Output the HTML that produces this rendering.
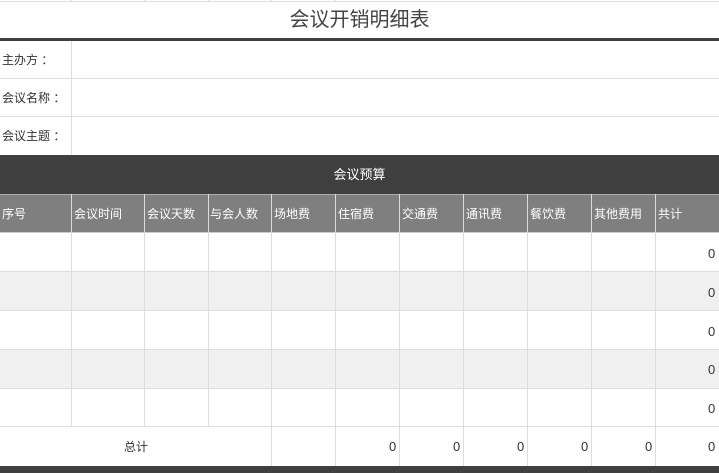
<!DOCTYPE html>
<html><head><meta charset="utf-8"><style>
*{margin:0;padding:0;box-sizing:border-box}
body{width:719px;height:473px;overflow:hidden;background:#fff;font-family:"Liberation Sans","Noto Sans CJK SC",sans-serif;color:#333;position:relative}
.a{position:absolute}
.t{font-size:12px;line-height:1}
.z{font-size:13px;line-height:1}
</style></head><body>
<div class="a" style="left:0;top:0;width:719px;height:2px;border-bottom:1px solid #ddd"></div>
<div class="a" style="left:71px;top:0;width:1px;height:2px;background:#ddd"></div>
<div class="a" style="left:144px;top:0;width:1px;height:2px;background:#ddd"></div>
<div class="a" style="left:208px;top:0;width:1px;height:2px;background:#ddd"></div>
<div class="a" style="left:271px;top:0;width:1px;height:2px;background:#ddd"></div>
<div class="a" style="left:335px;top:0;width:1px;height:2px;background:#ddd"></div>
<div class="a" style="left:0;top:2px;width:719px;height:36px;text-align:center;font-size:20px;line-height:36px;color:#444">会议开销明细表</div>
<div class="a" style="left:0;top:38px;width:719px;height:3px;background:#3f3f3f"></div>
<div class="a" style="left:71px;top:41px;width:1px;height:114px;background:#ddd"></div>
<div class="a" style="left:0;top:78px;width:719px;height:1px;background:#ddd"></div>
<div class="a" style="left:0;top:116px;width:719px;height:1px;background:#ddd"></div>
<div class="a t" style="left:2px;top:54px">主办方 ：</div>
<div class="a t" style="left:2px;top:92px">会议名称 ：</div>
<div class="a t" style="left:2px;top:130px">会议主题 ：</div>
<div class="a" style="left:0;top:155px;width:719px;height:39px;background:#3f3f3f;color:#fff;text-align:center;font-size:13px;line-height:39px">会议预算</div>
<div class="a" style="left:0;top:194px;width:719px;height:39px;background:#7f7f7f"></div>
<div class="a" style="left:0;top:272px;width:719px;height:39px;background:#f0f0f0"></div>
<div class="a" style="left:0;top:350px;width:719px;height:39px;background:#f0f0f0"></div>
<div class="a" style="left:0;top:194px;width:719px;height:1px;background:#aaa"></div>
<div class="a" style="left:0;top:232px;width:719px;height:1px;background:#ccc"></div>
<div class="a" style="left:0;top:271px;width:719px;height:1px;background:#ddd"></div>
<div class="a" style="left:0;top:310px;width:719px;height:1px;background:#ddd"></div>
<div class="a" style="left:0;top:349px;width:719px;height:1px;background:#ddd"></div>
<div class="a" style="left:0;top:388px;width:719px;height:1px;background:#ddd"></div>
<div class="a" style="left:0;top:426px;width:719px;height:1px;background:#ddd"></div>
<div class="a" style="left:0;top:466px;width:719px;height:7px;background:#3f3f3f"></div>
<div class="a" style="left:71px;top:194px;width:1px;height:233px;background:#ddd"></div>
<div class="a" style="left:144px;top:194px;width:1px;height:233px;background:#ddd"></div>
<div class="a" style="left:208px;top:194px;width:1px;height:233px;background:#ddd"></div>
<div class="a" style="left:271px;top:194px;width:1px;height:272px;background:#ddd"></div>
<div class="a" style="left:335px;top:194px;width:1px;height:272px;background:#ddd"></div>
<div class="a" style="left:399px;top:194px;width:1px;height:272px;background:#ddd"></div>
<div class="a" style="left:463px;top:194px;width:1px;height:272px;background:#ddd"></div>
<div class="a" style="left:527px;top:194px;width:1px;height:272px;background:#ddd"></div>
<div class="a" style="left:591px;top:194px;width:1px;height:272px;background:#ddd"></div>
<div class="a" style="left:655px;top:194px;width:1px;height:272px;background:#ddd"></div>
<div class="a t" style="top:208px;left:2px;color:#fff">序号</div>
<div class="a t" style="top:208px;left:74px;color:#fff">会议时间</div>
<div class="a t" style="top:208px;left:147px;color:#fff">会议天数</div>
<div class="a t" style="top:208px;left:210px;color:#fff">与会人数</div>
<div class="a t" style="top:208px;left:274px;color:#fff">场地费</div>
<div class="a t" style="top:208px;left:338px;color:#fff">住宿费</div>
<div class="a t" style="top:208px;left:402px;color:#fff">交通费</div>
<div class="a t" style="top:208px;left:466px;color:#fff">通讯费</div>
<div class="a t" style="top:208px;left:530px;color:#fff">餐饮费</div>
<div class="a t" style="top:208px;left:594px;color:#fff">其他费用</div>
<div class="a t" style="top:208px;left:658px;color:#fff">共计</div>
<div class="a z" style="top:247px;left:708px">0</div>
<div class="a z" style="top:286px;left:708px">0</div>
<div class="a z" style="top:325px;left:708px">0</div>
<div class="a z" style="top:363px;left:708px">0</div>
<div class="a z" style="top:402px;left:708px">0</div>
<div class="a t" style="top:441px;left:124px">总计</div>
<div class="a z" style="top:440px;left:389px">0</div>
<div class="a z" style="top:440px;left:453px">0</div>
<div class="a z" style="top:440px;left:517px">0</div>
<div class="a z" style="top:440px;left:581px">0</div>
<div class="a z" style="top:440px;left:645px">0</div>
<div class="a z" style="top:440px;left:708px">0</div>
</body></html>
